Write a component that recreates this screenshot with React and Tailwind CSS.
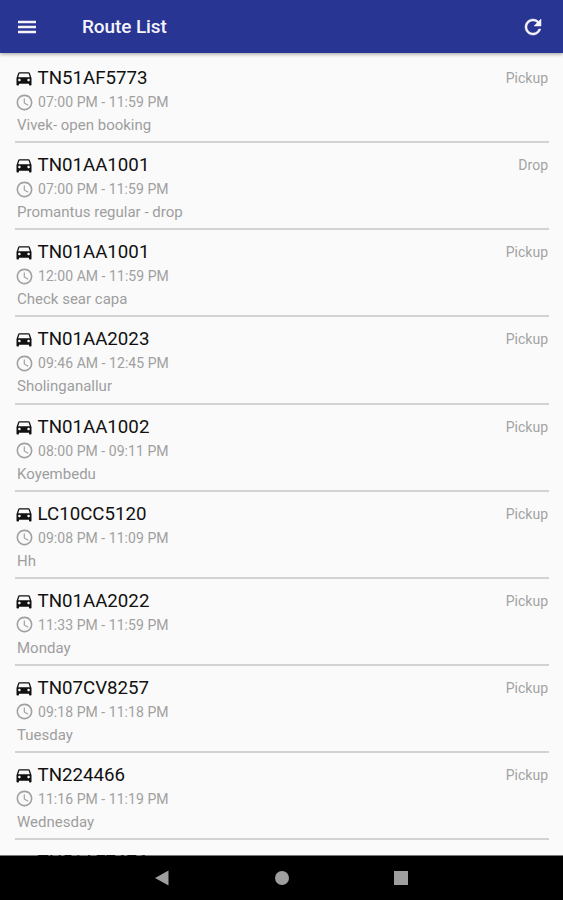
// App.jsx
import { MdAccessTime, MdDirectionsCar } from "react-icons/md";

const routes = [
  { vehicle: "TN51AF5773", time: "07:00 PM - 11:59 PM", name: "Vivek- open booking", type: "Pickup" },
  { vehicle: "TN01AA1001", time: "07:00 PM - 11:59 PM", name: "Promantus regular - drop", type: "Drop" },
  { vehicle: "TN01AA1001", time: "12:00 AM - 11:59 PM", name: "Check sear capa", type: "Pickup" },
  { vehicle: "TN01AA2023", time: "09:46 AM - 12:45 PM", name: "Sholinganallur", type: "Pickup" },
  { vehicle: "TN01AA1002", time: "08:00 PM - 09:11 PM", name: "Koyembedu", type: "Pickup" },
  { vehicle: "LC10CC5120", time: "09:08 PM - 11:09 PM", name: "Hh", type: "Pickup" },
  { vehicle: "TN01AA2022", time: "11:33 PM - 11:59 PM", name: "Monday", type: "Pickup" },
  { vehicle: "TN07CV8257", time: "09:18 PM - 11:18 PM", name: "Tuesday", type: "Pickup" },
  { vehicle: "TN224466", time: "11:16 PM - 11:19 PM", name: "Wednesday", type: "Pickup" },
  { vehicle: "TN51AF7676", time: "", name: "", type: "" },
];

const Header = () => (
  <header className="z-10 flex h-[53px] shrink-0 items-center bg-[#283593] pr-[18px] pl-[15px] text-[#f4f4fa] shadow-[0_1px_4px_rgba(0,0,0,0.4)]">
    <button aria-label="Menu">
      <svg className="h-6 w-6" viewBox="0 0 24 24" fill="currentColor">
        <path d="M3 18.2h18v-2.5H3v2.5zm0-5h18v-2.5H3v2.5zm0-7.5v2.5h18V5.700H3z" />
      </svg>
    </button>
    <h1 className="ml-[43px] flex-1 text-[19px] leading-6 font-medium tracking-[-0.1px]">Route List</h1>
    <button aria-label="Refresh">
      <svg className="h-6 w-6" viewBox="0 0 24 24" fill="currentColor" stroke="currentColor" strokeWidth="0.5">
        <path d="M17.65 6.35A7.958 7.958 0 0 0 12 4c-4.42 0-7.990 3.580-7.990 8s3.570 8 7.990 8c3.730 0 6.840-2.550 7.730-6h-2.080A5.990 5.990 0 0 1 12 18c-3.310 0-6-2.690-6-6s2.690-6 6-6c1.660 0 3.140.69 4.220 1.780L13 11h7V4l-2.350 2.350z" />
      </svg>
    </button>
  </header>
);

const RouteItem = ({ route }) => (
  <li className="h-[87.1px] shrink-0 border-b-2 border-[#d3d3d3] pt-[10px]">
    <div className="flex h-[24px] items-center">
      <MdDirectionsCar className="-ml-[1.5px] h-5 w-5 text-[#111111]" />
      <span className="ml-[4px] flex-1 text-[18.7px] leading-6 text-[#111111]">
        {route.vehicle}
      </span>
      <span className="mr-px text-[14px] leading-5 text-[#a3a3a3]">{route.type}</span>
    </div>
    {route.time && (
      <>
        <div className="flex h-[24px] items-center text-[#a0a0a0]">
          <MdAccessTime className="-ml-[0.5px] h-[19px] w-[19px]" />
          <span className="ml-[4.500px] text-[14px] leading-5 tracking-[0.05px]">{route.time}</span>
        </div>
        <p className="ml-[2px] text-[15px] leading-[22px] text-[#9e9e9e]">{route.name}</p>
      </>
    )}
  </li>
);

const NavBar = () => (
  <footer className="z-10 flex h-[44px] shrink-0 items-center bg-black pl-[154px] text-[#9e9e9e]">
    <svg className="h-4 w-[15px]" viewBox="0 0 15 16" fill="currentColor">
      <path d="M14.5 0.5v15L1 8z" />
    </svg>
    <span className="ml-[106px] h-[14px] w-[14px] rounded-full bg-[#9e9e9e]" />
    <span className="ml-[105px] h-[14px] w-[14px] bg-[#9e9e9e]" />
  </footer>
);

const App = () => {
  return (
    <div className="flex h-screen flex-col overflow-hidden bg-[#fafafa] font-['Roboto',sans-serif]">
      <Header />
      <ul className="min-h-0 flex-1 overflow-hidden bg-[linear-gradient(to_top,#777777_1px,#fafafa_1px)] pt-[3.2px] pr-[14px] pl-[15px]">
        {routes.map((route, i) => (
          <RouteItem key={i} route={route} />
        ))}
      </ul>
      <NavBar />
    </div>
  );
};

export default App;
